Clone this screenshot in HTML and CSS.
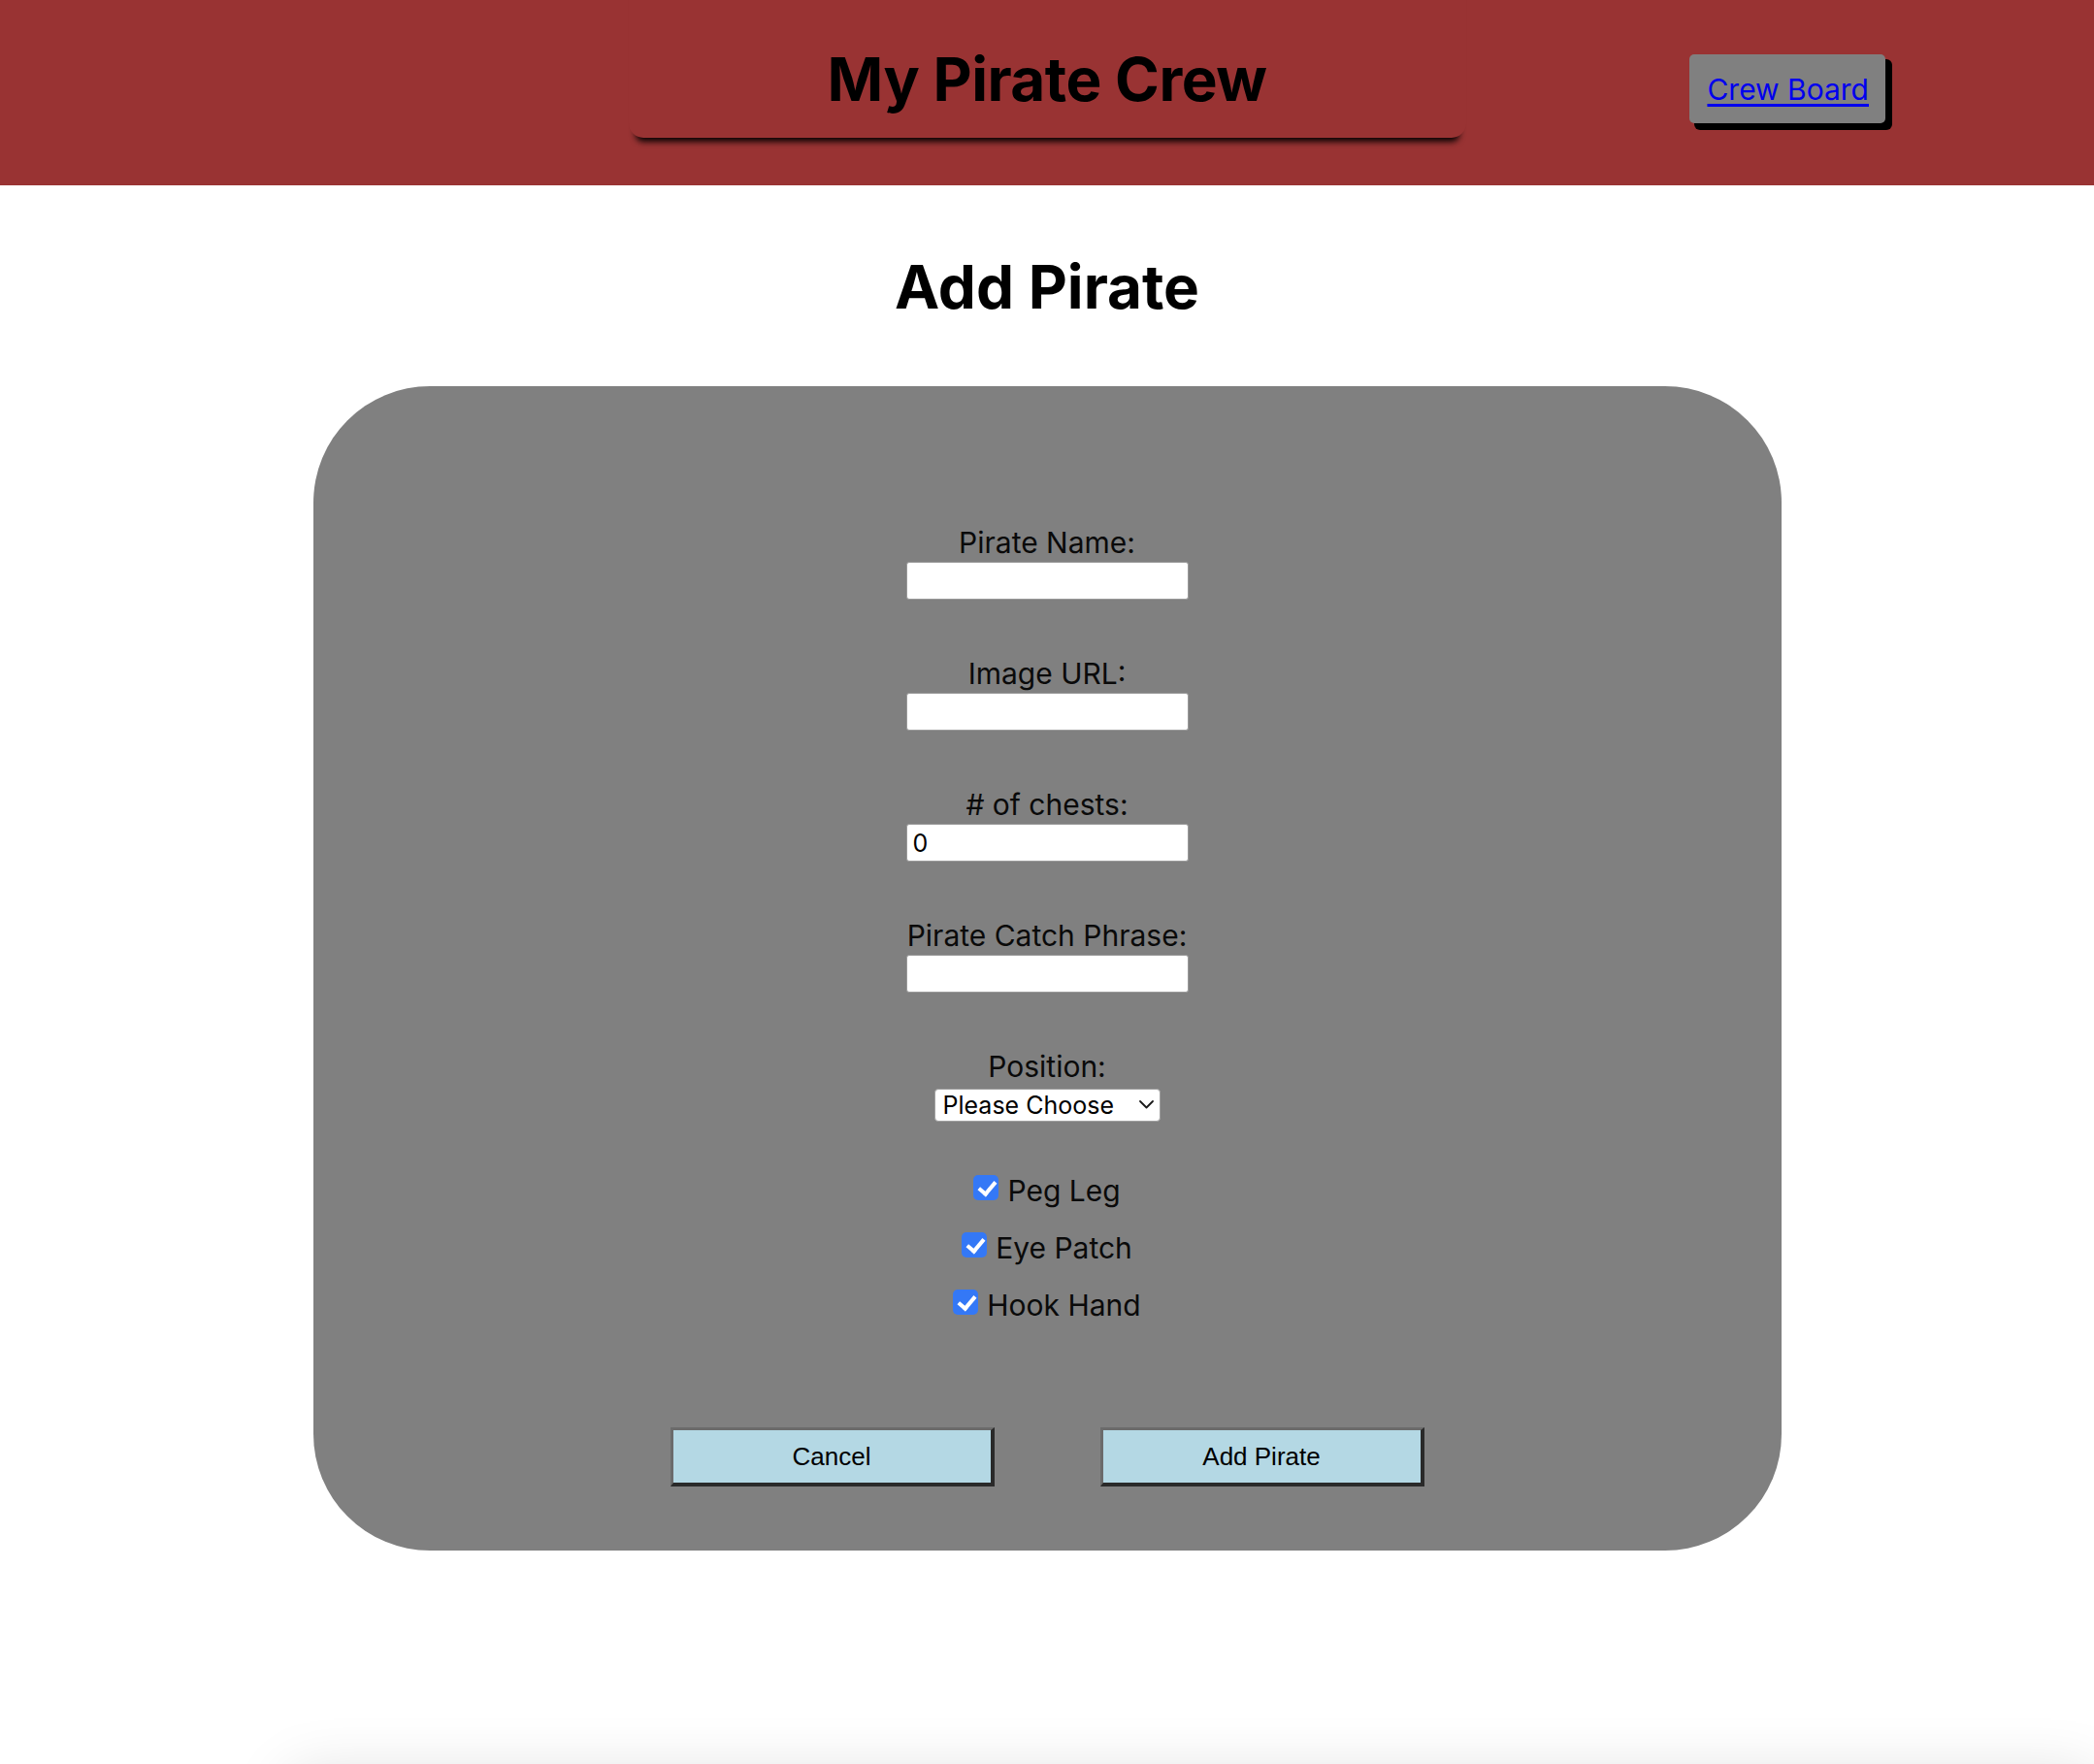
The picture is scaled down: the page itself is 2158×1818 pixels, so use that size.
FILE: index.html
```html
<!DOCTYPE html>
<html lang="en">
<head>
<meta charset="utf-8">
<title>My Pirate Crew</title>
<link rel="stylesheet" href="styles.css">
</head>
<body>
<header class="site-header">
  <div class="title-box"><h1 class="site-title">My Pirate Crew</h1></div>
  <nav class="nav"><a class="nav-link" href="#">Crew Board</a></nav>
</header>
<main class="main">
  <h2 class="page-title">Add Pirate</h2>
  <form class="card">
    <div class="field">
      <label class="field-label" for="name">Pirate Name:</label>
      <input class="text-input" id="name" type="text">
    </div>
    <div class="field">
      <label class="field-label" for="image">Image URL:</label>
      <input class="text-input" id="image" type="text">
    </div>
    <div class="field">
      <label class="field-label" for="chests"># of chests:</label>
      <input class="text-input" id="chests" type="text" value="0">
    </div>
    <div class="field">
      <label class="field-label" for="phrase">Pirate Catch Phrase:</label>
      <input class="text-input" id="phrase" type="text">
    </div>
    <div class="field field-select">
      <label class="field-label" for="position">Position:</label>
      <span class="select-wrap">
        <select class="select" id="position"><option>Please Choose</option></select>
        <svg class="chevron" width="15" height="9" viewBox="0 0 15 9"><polyline points="1,1 7.5,7.5 14,1" fill="none" stroke="#1a1a1a" stroke-width="1.8" stroke-linecap="round" stroke-linejoin="round"/></svg>
      </span>
    </div>
    <div class="checks">
      <label class="check-row"><input class="check" type="checkbox" checked><span>Peg Leg</span></label>
      <label class="check-row"><input class="check" type="checkbox" checked><span>Eye Patch</span></label>
      <label class="check-row"><input class="check" type="checkbox" checked><span>Hook Hand</span></label>
    </div>
    <div class="actions">
      <button class="btn" type="button">Cancel</button>
      <button class="btn" type="submit">Add Pirate</button>
    </div>
  </form>
  <div class="below"></div>
</main>
</body>
</html>
```
FILE: styles.css
```css
* { box-sizing: border-box; }
html, body { margin: 0; padding: 0; background: #ffffff; }
body {
  font-family: Inter, "Noto Sans", "Liberation Sans", sans-serif;
  color: #000;
  overflow: hidden;
  height: 1818px;
}

.site-header {
  height: 191px;
  background: #993333;
  display: grid;
  grid-template-columns: 1fr 863px 1fr;
  align-items: start;
  overflow: hidden;
}
.title-box {
  grid-column: 2;
  margin-top: -30px;
  height: 172px;
  background: #993333;
  border-radius: 0 0 15px 15px;
  box-shadow: 0 11px 6px -7px rgba(0, 0, 0, 0.95);
  padding-top: 74px;
  text-align: center;
}
.site-title {
  margin: 0;
  font-size: 62px;
  line-height: 75px;
  font-weight: 700;
  letter-spacing: -0.5px;
}
.nav {
  grid-column: 3;
  justify-self: end;
  margin-top: 56px;
  margin-right: 215px;
}
.nav-link {
  display: block;
  background: #808080;
  border-radius: 5px;
  box-shadow: 6px 6px 0 1px #000;
  padding: 18px 17px 17px 18px;
  font-size: 30px;
  line-height: 36px;
  color: #0000ee;
  text-decoration: underline;
  text-underline-offset: 4px;
}

.main { display: flex; flex-direction: column; align-items: center; }
.page-title {
  margin: 67px 0 65px;
  font-size: 62px;
  line-height: 75px;
  font-weight: 700;
}

.card {
  width: 1513px;
  height: 1200px;
  background: #808080;
  border-radius: 120px;
  padding: 143px 0 65px;
  display: flex;
  flex-direction: column;
  align-items: center;
}
.field {
  display: flex;
  flex-direction: column;
  align-items: center;
  gap: 2px;
  margin-bottom: 58px;
}
.field-select { gap: 5px; margin-bottom: 53px; }
.field-label {
  font-size: 30px;
  line-height: 36px;
  color: #0a0a0a;
}
.text-input {
  width: 291px;
  height: 39px;
  background: #fff;
  border: 1px solid #9a9a9a;
  border-radius: 3px;
  padding: 0 6px;
  font-family: Inter, "Noto Sans", sans-serif;
  font-size: 25px;
  color: #000;
}
.select-wrap { position: relative; display: inline-block; }
.select {
  appearance: none;
  -webkit-appearance: none;
  width: 233px;
  height: 34px;
  background: #fff;
  border: 1px solid #a0a0a0;
  border-radius: 4px;
  padding: 0 0 0 8px;
  font-family: Inter, "Noto Sans", sans-serif;
  font-size: 25px;
  color: #000;
}
.chevron {
  position: absolute;
  right: 7px;
  top: 12px;
  pointer-events: none;
}

.checks {
  display: flex;
  flex-direction: column;
  align-items: center;
  gap: 23px;
}
.check-row {
  display: inline-flex;
  align-items: flex-start;
  gap: 9px;
  font-size: 30px;
  line-height: 36px;
  color: #0a0a0a;
}
.check {
  appearance: none;
  -webkit-appearance: none;
  position: relative;
  margin: 2px 0 0;
  width: 26px;
  height: 26px;
  border-radius: 5px;
  background: #3478f6;
}
.check::after {
  content: "";
  position: absolute;
  left: 9px;
  top: 3px;
  width: 7px;
  height: 14px;
  border-right: 4px solid #fff;
  border-bottom: 4px solid #fff;
  transform: rotate(40deg);
}

.actions {
  display: flex;
  gap: 109px;
  margin-top: 108px;
}
.btn {
  width: 334px;
  height: 61px;
  background: #b4d8e4;
  border-style: solid;
  border-width: 3px 4px 4px 3px;
  border-color: #6b6b6b #2a2a2a #2a2a2a #6b6b6b;
  font-family: "Liberation Sans", Arial, sans-serif;
  font-size: 26px;
  color: #000;
  padding: 0;
}

.below {
  align-self: stretch;
  margin: 232px 0 0 300px;
  height: 300px;
  background: #fff;
  box-shadow: 0 0 60px rgba(0, 0, 0, 0.14);
}
```
